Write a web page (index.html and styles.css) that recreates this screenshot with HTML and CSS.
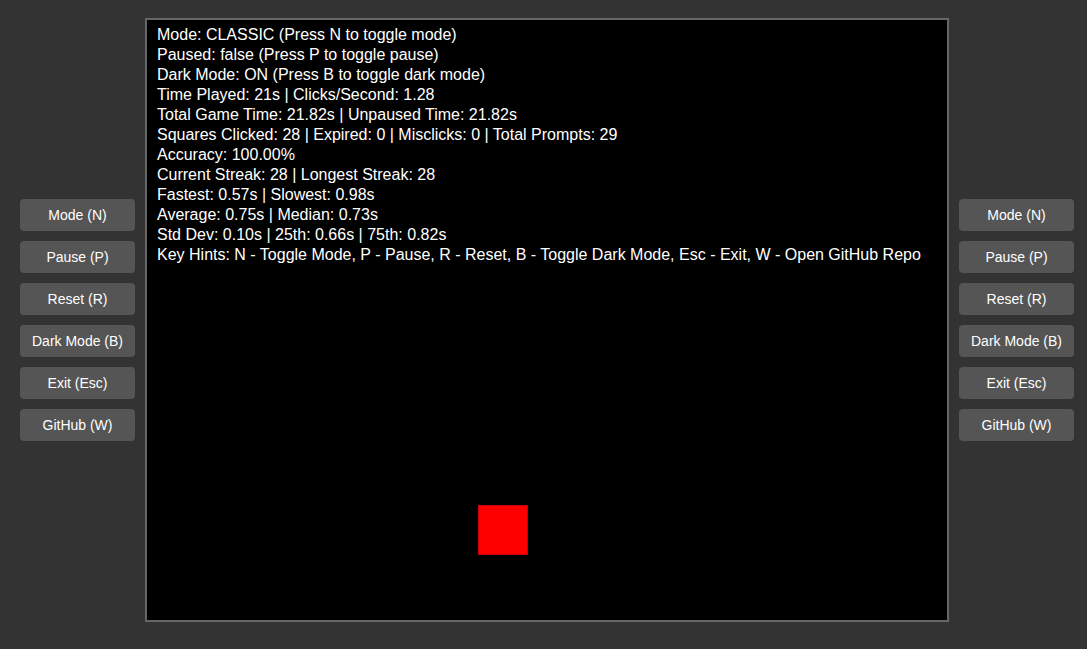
FILE: index.html
```html
<!DOCTYPE html>
<html>
<head>
<meta charset="utf-8">
<link rel="stylesheet" href="styles.css">
</head>
<body>
<div class="app">
  <div class="controls">
    <button class="btn">Mode (N)</button>
    <button class="btn">Pause (P)</button>
    <button class="btn">Reset (R)</button>
    <button class="btn">Dark Mode (B)</button>
    <button class="btn">Exit (Esc)</button>
    <button class="btn">GitHub (W)</button>
  </div>
  <div class="game">
    <div class="stats">
      <div>Mode: CLASSIC (Press N to toggle mode)</div>
      <div>Paused: false (Press P to toggle pause)</div>
      <div>Dark Mode: ON (Press B to toggle dark mode)</div>
      <div>Time Played: 21s | Clicks/Second: 1.28</div>
      <div>Total Game Time: 21.82s | Unpaused Time: 21.82s</div>
      <div>Squares Clicked: 28 | Expired: 0 | Misclicks: 0 | Total Prompts: 29</div>
      <div>Accuracy: 100.00%</div>
      <div>Current Streak: 28 | Longest Streak: 28</div>
      <div>Fastest: 0.57s | Slowest: 0.98s</div>
      <div>Average: 0.75s | Median: 0.73s</div>
      <div>Std Dev: 0.10s | 25th: 0.66s | 75th: 0.82s</div>
      <div>Key Hints: N - Toggle Mode, P - Pause, R - Reset, B - Toggle Dark Mode, Esc - Exit, W - Open GitHub Repo</div>
    </div>
    <div class="target" style="left:331px; top:485px;"></div>
  </div>
  <div class="controls">
    <button class="btn">Mode (N)</button>
    <button class="btn">Pause (P)</button>
    <button class="btn">Reset (R)</button>
    <button class="btn">Dark Mode (B)</button>
    <button class="btn">Exit (Esc)</button>
    <button class="btn">GitHub (W)</button>
  </div>
</div>
</body>
</html>
```
FILE: styles.css
```css
html, body {
  margin: 0;
  padding: 0;
  background: #333333;
  height: 100%;
  overflow: hidden;
}
.app {
  display: flex;
  align-items: center;
  gap: 10px;
  padding: 18px 0 0 20px;
  font-family: "Liberation Sans", Arial, sans-serif;
}
.controls {
  display: flex;
  flex-direction: column;
  gap: 10px;
}
.btn {
  width: 115px;
  height: 32px;
  margin: 0;
  padding: 0;
  border: none;
  border-radius: 4px;
  background: #555555;
  color: #ffffff;
  font-family: "Liberation Sans", Arial, sans-serif;
  font-size: 14px;
  cursor: pointer;
}
.game {
  position: relative;
  width: 800px;
  height: 600px;
  background: #000000;
  border: 2px solid #666666;
  flex: none;
}
.stats {
  padding: 5px 0 0 10px;
  color: #ffffff;
  font-size: 16px;
  line-height: 20px;
  white-space: nowrap;
}
.target {
  position: absolute;
  width: 50px;
  height: 50px;
  background: #ff0000;
  box-sizing: border-box;
  border: 1px solid #cc0000;
}
```
